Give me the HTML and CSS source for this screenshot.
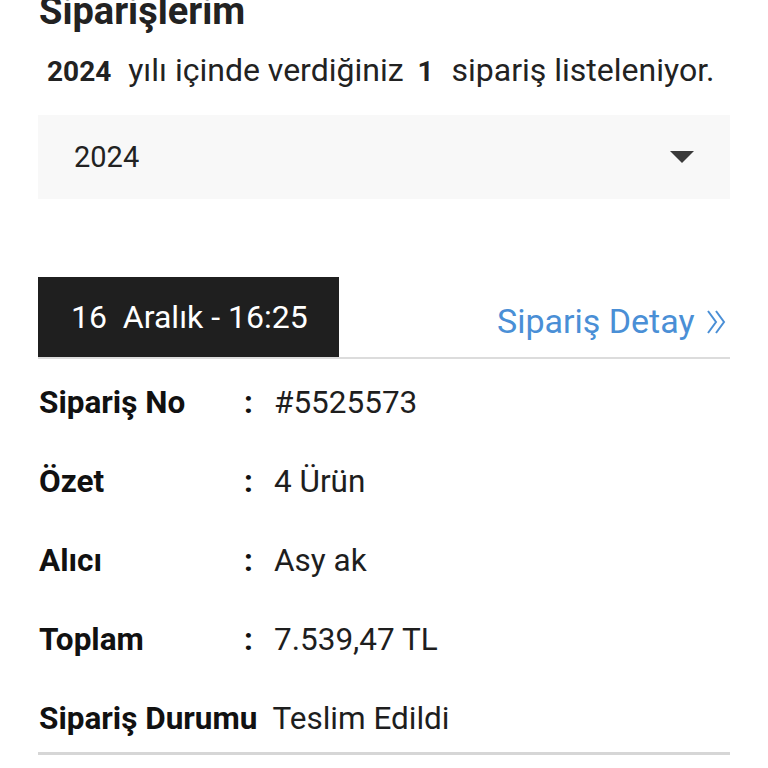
FILE: index.html
```html
<!DOCTYPE html>
<html lang="tr">
<head>
<meta charset="utf-8">
<link rel="stylesheet" href="styles.css">
</head>
<body>
<main class="page">
  <h1 class="title">Siparişlerim</h1>
  <p class="summary"><b class="year">2024</b> yılı içinde verdiğiniz <b class="count">1</b> sipariş listeleniyor.</p>
  <div class="select">
    <span class="select-value">2024</span>
    <svg class="caret" width="24" height="12" viewBox="0 0 24 12"><path d="M0 0H24L12 12Z" fill="#3a3a3a"/></svg>
  </div>
  <section class="order">
    <div class="order-head">
      <div class="date-tab">16&nbsp; Aralık - 16:25</div>
      <a class="detail-link">Sipariş Detay <svg class="chev" width="21" height="26" viewBox="0 0 21 26"><path d="M2 2L10 13L2 24M10 2L18 13L10 24" fill="none" stroke="#4a8fd6" stroke-width="2"/></svg></a>
    </div>
    <div class="rows">
      <div class="row"><span class="label">Sipariş No</span><span class="colon">:</span><span class="value">#5525573</span></div>
      <div class="row"><span class="label">Özet</span><span class="colon">:</span><span class="value">4 Ürün</span></div>
      <div class="row"><span class="label">Alıcı</span><span class="colon">:</span><span class="value">Asy ak</span></div>
      <div class="row"><span class="label">Toplam</span><span class="colon">:</span><span class="value">7.539,47 TL</span></div>
      <div class="row last"><span class="label">Sipariş Durumu</span><span class="value">Teslim Edildi</span></div>
    </div>
  </section>
</main>
</body>
</html>
```

FILE: styles.css
```css
* { box-sizing: border-box; }
html, body { margin: 0; padding: 0; background: #fff; }
body { font-family: Roboto, "Noto Sans", sans-serif; color: #1e1e1e; }
.page { padding: 0 38px; width: 768px; }
.title {
  margin: -12px 0 0 1px;
  font-size: 38px;
  font-weight: 700;
  line-height: 46px;
  color: #222;
}
.summary {
  margin: 16px 0 0 9px;
  font-size: 32px;
  line-height: 40px;
  color: #222;
  white-space: nowrap;
}
.summary b { font-weight: 700; font-size: 28px; }
.summary .year { padding-right: 9px; }
.summary .count { padding: 0 10px 0 6px; }
.select {
  margin-top: 23px;
  height: 84px;
  background: #f8f8f8;
  display: flex;
  align-items: center;
  justify-content: space-between;
  padding: 0 36px 0 36px;
}
.select-value { font-size: 29px; color: #222; }
.caret { display: block; margin-top: -1px; }
.order { margin-top: 78px; }
.order-head {
  display: flex;
  justify-content: space-between;
  align-items: center;
  border-bottom: 2px solid #dcdcdc;
}
.date-tab {
  background: #1f1f1f;
  color: #fff;
  width: 301px;
  height: 80px;
  display: flex;
  align-items: center;
  padding-left: 33px;
  font-size: 32px;
}
.detail-link {
  color: #4a8fd6;
  font-size: 34px;
  padding-right: 3px;
  margin-top: 8px;
  display: flex;
  align-items: center;
  white-space: pre;
}
.chev { display: block; margin-left: 3px; margin-top: 2px; }
.rows {
  border-bottom: 3px solid #d6d6d6;
  padding-top: 5px;
}
.row {
  display: flex;
  align-items: flex-start;
  height: 79px;
  padding-top: 19px;
  line-height: 40px;
  font-size: 31.5px;
}
.row.last { height: 72px; }
.label { width: 206px; font-weight: 700; color: #111; padding-left: 1px; }
.colon { width: 30px; font-weight: 700; color: #111; }
.value { color: #1e1e1e; }
.row.last .label { width: auto; margin-right: 15px; }
```
